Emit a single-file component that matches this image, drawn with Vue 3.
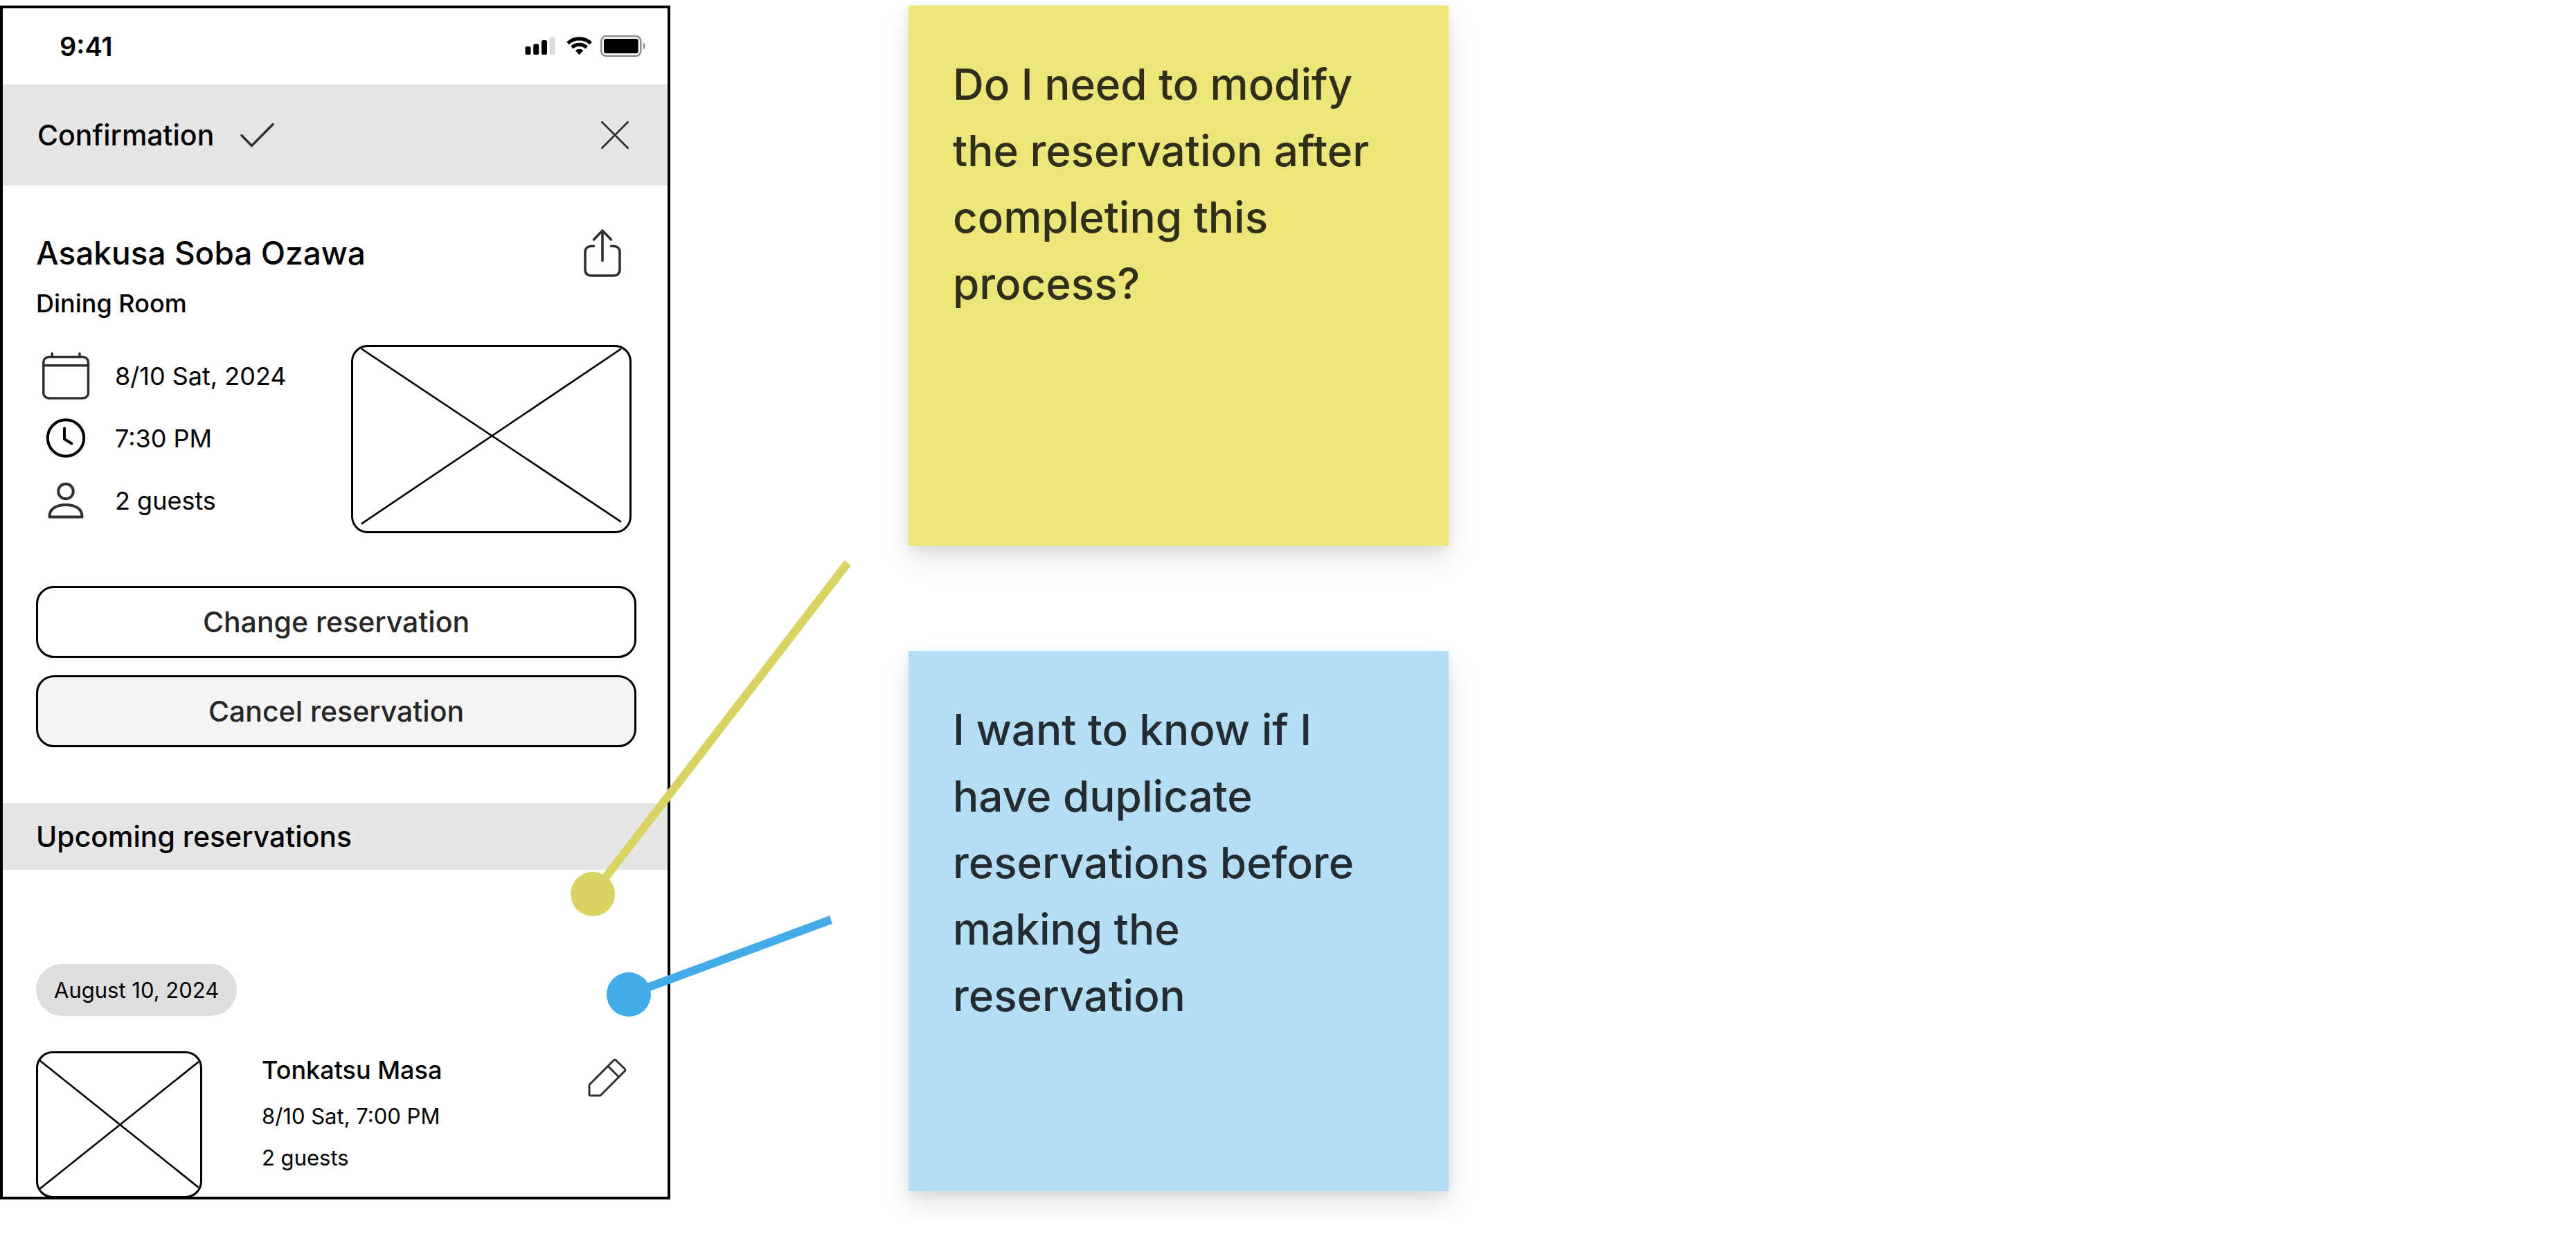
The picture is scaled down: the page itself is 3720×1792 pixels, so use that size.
<script setup>
const details = [
  { icon: 'calendar', text: '8/10 Sat, 2024' },
  { icon: 'clock', text: '7:30 PM' },
  { icon: 'person', text: '2 guests' },
]
const notes = [
  { tone: 'yellow', text: 'Do I need to modify the reservation after completing this process?' },
  { tone: 'blue', text: 'I want to know if I have duplicate reservations before making the reservation' },
]
</script>

<template>
  <main class="board">
    <div class="screen">
      <section class="phone">
        <div class="status">
          <span class="time">9:41</span>
          <svg class="status-icons" width="180" height="40" viewBox="0 0 180 40" aria-hidden="true">
            <rect x="2.5" y="20" width="8" height="12" rx="2.5" />
            <rect x="14.2" y="16.5" width="8" height="15.5" rx="2.5" />
            <rect x="26" y="11" width="8" height="21" rx="2.5" />
            <rect x="37.7" y="6" width="8" height="26" rx="2.5" fill="#dcdcdc" />
            <g fill="none" stroke="#000" stroke-width="5.2">
              <path d="M64 15.5a24 24 0 0 1 33.2 0" />
              <path d="M70 21.5a15.5 15.5 0 0 1 21.2 0" />
            </g>
            <path d="M74.8 26a8.6 8.6 0 0 1 11.6 0l-5.8 6.2z" />
            <rect x="112.3" y="5.3" width="57" height="28.5" rx="7" fill="none" stroke="#8e8e93" stroke-width="2.5" />
            <rect x="116" y="9" width="49.7" height="21" rx="3" />
            <path d="M173 14.500c3.500 1 3.500 9 0 10z" fill="#8e8e93" />
          </svg>
        </div>

        <header class="bar heading">
          <h1 class="label">Confirmation</h1>
          <svg class="line" width="50" height="38" viewBox="0 0 50 38" stroke-width="3.4" aria-hidden="true">
            <path d="M2 19.5L16.5 34.5 47 3.5" />
          </svg>
          <button class="icon-button close" aria-label="Close">
            <svg class="line" width="44" height="44" viewBox="0 0 44 44" stroke-width="2.8">
              <path d="M3.3 3.3l37.4 37.4M40.7 3.3L3.3 40.7" />
            </svg>
          </button>
        </header>

        <div class="content booking">
          <div class="title-row">
            <h2 class="title">Asakusa Soba Ozawa</h2>
            <button class="icon-button share" aria-label="Share">
              <svg class="line" width="56" height="72" viewBox="0 0 56 72" stroke-width="3.6">
                <path d="M15.5 26.5H11a8 8 0 0 0-8 8V61a8 8 0 0 0 8 8h34a8 8 0 0 0 8-8V34.5a8 8 0 0 0-8-8h-4.5M28 47.5V4M15.5 17L28 4l12.5 13" />
              </svg>
            </button>
          </div>
          <p class="room">Dining Room</p>

          <div class="details">
            <ul class="facts">
              <li v-for="d in details" :key="d.icon" class="fact">
                <svg v-if="d.icon === 'calendar'" class="line" width="72" height="72" viewBox="0 0 72 72" stroke-width="3.5" aria-hidden="true">
                  <rect x="3.8" y="8.5" width="64.7" height="59.5" rx="7.5" />
                  <path d="M4 20.7h64.5M16.3 3.500v5M56 3.500v5" />
                </svg>
                <svg v-else-if="d.icon === 'clock'" class="line" width="72" height="72" viewBox="0 0 72 72" aria-hidden="true">
                  <circle cx="36" cy="35.5" r="26.2" stroke="#000" stroke-width="4" />
                  <path d="M34 21.500v15.500l10.500 6.500" stroke="#000" stroke-width="4" />
                </svg>
                <svg v-else class="line" width="72" height="72" viewBox="0 0 72 72" stroke-width="4" aria-hidden="true">
                  <circle cx="36" cy="22.5" r="10.8" />
                  <path d="M12.5 59.5C12 48 22 42 36 42s24 6 23.5 17.5z" />
                </svg>
                <span>{{ d.text }}</span>
              </li>
            </ul>
            <div class="picture wide">
              <svg width="100%" height="100%" stroke="#000" stroke-width="2.6" aria-hidden="true">
                <line x1="3%" y1="1%" x2="97%" y2="95%" />
                <line x1="3%" y1="96%" x2="97%" y2="1%" />
              </svg>
            </div>
          </div>

          <div class="actions">
            <button class="action">Change reservation</button>
            <button class="action muted">Cancel reservation</button>
          </div>
        </div>

        <div class="bar band">
          <h2 class="label">Upcoming reservations</h2>
        </div>

        <div class="content upcoming">
          <span class="pill">August 10, 2024</span>
          <article class="entry">
            <div class="picture small">
              <svg width="100%" height="100%" stroke="#000" stroke-width="2.6" aria-hidden="true">
                <line x1="1%" y1="5%" x2="99%" y2="94%" />
                <line x1="1%" y1="95%" x2="99%" y2="6%" />
              </svg>
            </div>
            <div class="entry-text">
              <h3 class="name">Tonkatsu Masa</h3>
              <p class="meta">8/10 Sat, 7:00 PM</p>
              <p class="meta">2 guests</p>
            </div>
            <button class="icon-button edit" aria-label="Edit reservation">
              <svg class="line" width="56" height="56" viewBox="0 0 56 56" stroke-width="3">
                <path d="M2 38.5L37.3 3a2 2 0 0 1 3 0L53.3 15.5a2 2 0 0 1 0 3L18 54H4a2 2 0 0 1-2-2zM29 11.5L44 26.5" />
              </svg>
            </button>
          </article>
        </div>
      </section>

      <svg class="connectors" width="440" height="680" viewBox="0 0 440 680" stroke-width="12" aria-hidden="true">
        <g stroke="#d9d363" fill="#d9d363">
          <line x1="56" y1="491" x2="424" y2="13" />
          <circle cx="56" cy="491" r="32" stroke="none" />
        </g>
        <g stroke="#43abe8" fill="#43abe8">
          <line x1="108" y1="636" x2="400" y2="528" />
          <circle cx="108" cy="636" r="32" stroke="none" />
        </g>
      </svg>
    </div>

    <aside class="notes">
      <p v-for="n in notes" :key="n.tone" class="note" :class="n.tone">{{ n.text }}</p>
    </aside>
  </main>
</template>

<style>
body {
  background: #fff;
}
</style>

<style scoped>
.board {
  display: grid;
  grid-template-columns: 242fr 86fr 195fr 407fr;
  align-items: start;
  padding: 8px 0 32px;
  font-family: Inter, "Liberation Sans", sans-serif;
  color: #000;
}
h1, h2, h3, p, ul {
  margin: 0;
  padding: 0;
  font-weight: 400;
}
svg {
  display: block;
  flex: none;
}
button {
  font: inherit;
  padding: 0;
  cursor: pointer;
}
.line {
  fill: none;
  stroke: #303030;
  stroke-linecap: round;
  stroke-linejoin: round;
}
.screen {
  position: relative;
}
.phone {
  border: 4px solid #000;
  overflow: hidden;
}
.status {
  display: flex;
  align-items: center;
  justify-content: space-between;
  height: 110px;
  padding: 0 28px 0 82px;
}
.time {
  font-size: 38px;
  font-weight: 600;
}
.bar {
  display: flex;
  align-items: center;
  background: #e6e6e6;
  padding: 0 48px;
}
.heading {
  height: 146px;
  gap: 38px;
  padding-left: 50px;
}
.label {
  font-size: 41px;
  font-weight: 500;
}
.icon-button {
  border: 0;
  background: none;
}
.close {
  margin-left: auto;
  margin-right: 6px;
}
.content {
  padding: 0 45px 0 48px;
}
.booking {
  padding-top: 61px;
}
.title-row {
  display: flex;
  align-items: center;
  justify-content: space-between;
  height: 72px;
}
.title {
  font-size: 46px;
  font-weight: 500;
}
.share {
  margin-right: 21px;
}
.room {
  margin-top: 13px;
  font-size: 36px;
  font-weight: 500;
  line-height: 48px;
}
.details {
  display: flex;
  justify-content: space-between;
  margin-top: 36px;
  padding: 0 7px;
}
.facts {
  list-style: none;
}
.fact {
  display: flex;
  align-items: center;
  gap: 35px;
  height: 90px;
  font-size: 36px;
}
.picture {
  box-sizing: border-box;
  border: 3px solid #000;
  border-radius: 24px;
}
.wide {
  flex: 0 1 405px;
  height: 272px;
}
.actions {
  display: flex;
  flex-direction: column;
  gap: 25px;
  margin-top: 76px;
}
.action {
  height: 104px;
  border: 3px solid #000;
  border-radius: 26px;
  background: #fff;
  color: #262626;
  font-size: 41px;
  font-weight: 500;
}
.muted {
  background: #f4f4f4;
}
.band {
  height: 96px;
  margin-top: 81px;
}
.upcoming {
  padding-top: 136px;
}
.pill {
  display: block;
  width: fit-content;
  padding: 0 26px;
  border-radius: 38px;
  background: #dedede;
  font-size: 31px;
  line-height: 75px;
}
.entry {
  display: flex;
  align-items: flex-start;
  margin-top: 51px;
}
.small {
  width: 240px;
  height: 212px;
  margin-bottom: -2px;
}
.entry-text {
  margin-left: 86px;
}
.name {
  margin-bottom: 10px;
  font-size: 36px;
  font-weight: 500;
  line-height: 54px;
}
.meta {
  font-size: 31px;
  line-height: 60px;
}
.edit {
  margin: 10px 14px 0 auto;
}
.connectors {
  position: absolute;
  top: 792px;
  left: calc(100% - 168px);
}
.notes {
  grid-column: 3;
  display: flex;
  flex-direction: column;
  gap: 152px;
}
.note {
  box-sizing: border-box;
  aspect-ratio: 1;
  padding: 66px 64px;
  font-size: 62px;
  font-weight: 500;
  line-height: 96px;
  box-shadow: 0 20px 40px rgba(0, 0, 0, 0.1), 0 6px 16px rgba(0, 0, 0, 0.08);
}
.yellow {
  background: #ece67a;
  color: #302d1b;
}
.blue {
  background: #b5ddf4;
  color: #242b31;
}
</style>
